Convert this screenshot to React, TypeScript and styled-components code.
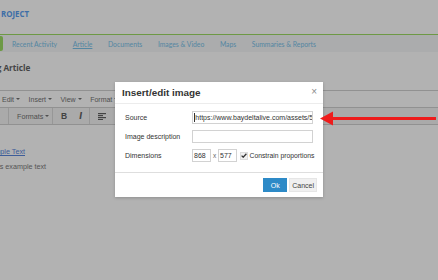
import React from "react";
import styled, { createGlobalStyle } from "styled-components";

const Global = createGlobalStyle`
  html, body { margin: 0; padding: 0; width: 438px; height: 280px; overflow: hidden; background: #ffffff; }
  #root { position: relative; width: 438px; height: 280px; overflow: hidden; }
  * { box-sizing: border-box; }
`;

const Page = styled.div`
  position: relative;
  width: 438px;
  height: 280px;
  background: #ffffff;
  font-family: "Liberation Sans", Arial, sans-serif;
  overflow: hidden;
`;

const Header = styled.header`
  height: 35px;
  display: flex;
  align-items: center;
  padding-left: 1px;
  border-bottom: 1.5px solid #9ddc63;
`;

const Brand = styled.div`
  font-family: "Open Sans", sans-serif;
  font-weight: 700;
  font-size: 7.9px;
  color: #5a9ef0;
  margin-top: -7px;
`;

const Nav = styled.nav`
  height: 17px;
  background: #f5f7f8;
  display: flex;
  align-items: center;
  gap: 15.6px;
`;

const ActiveTab = styled.div`
  width: 3px;
  height: 15px;
  align-self: flex-start;
  margin-top: 1px;
  background: #9ddc63;
  margin-right: -6.6px;
  border-radius: 0 2px 2px 0;
`;

const NavLink = styled.span<{ $current?: boolean }>`
  font-family: "Lato", sans-serif;
  font-size: 6.8px;
  color: #7ac2e9;
  text-decoration: ${(p) => (p.$current ? "underline" : "none")};
  white-space: nowrap;
`;

const PageTitle = styled.h1`
  margin: 10px 0 0 -27px;
  height: 12px;
  font-family: "Open Sans", sans-serif;
  font-weight: 700;
  font-size: 8.2px;
  line-height: 12px;
  color: #626262;
  white-space: nowrap;
`;

const Editor = styled.div`
  margin-top: 16px;
  border-top: 1px solid #d0d0d0;
`;

const MenuBar = styled.div`
  height: 17px;
  display: flex;
  align-items: center;
  gap: 8.5px;
  padding-left: 2px;
  border-bottom: 1px solid #d0d0d0;
`;

const MenuItem = styled.span`
  font-size: 7px;
  color: #727272;
  display: inline-flex;
  align-items: center;
  gap: 2px;
  white-space: nowrap;
`;

const Caret = styled.span`
  display: inline-block;
  width: 0;
  height: 0;
  border-left: 2px solid transparent;
  border-right: 2px solid transparent;
  border-top: 2.5px solid #727272;
`;

const ToolBar = styled.div`
  height: 17px;
  display: flex;
  align-items: center;
  background: #f4f4f4;
  border-bottom: 1px solid #d0d0d0;
`;

const ToolGroup = styled.div<{ $w: number; $first?: boolean }>`
  width: ${(p) => p.$w}px;
  height: 100%;
  display: flex;
  align-items: center;
  gap: 12px;
  padding-left: 8px;
  border-left: ${(p) => (p.$first ? "none" : "1px solid #d8d8d8")};
`;

const ToolText = styled.span`
  font-size: 7.2px;
  color: #727272;
  display: inline-flex;
  align-items: center;
  gap: 2px;
`;

const ToolBold = styled.span`
  font-weight: 700;
  font-size: 8.5px;
  color: #606060;
`;

const ToolItalic = styled.span`
  font-weight: 700;
  font-style: italic;
  font-family: "DejaVu Sans", sans-serif;
  font-size: 8px;
  color: #606060;
`;

const Content = styled.div`
  padding: 22px 0 0 0;
  display: flex;
  flex-direction: column;
  gap: 6px;
  font-size: 7.2px;
  line-height: 9px;
`;

const ContentLink = styled.span`
  color: #5a86dc;
  text-decoration: underline;
  margin-left: -18px;
  white-space: nowrap;
`;

const ContentText = styled.span`
  color: #7a7a7a;
  margin-left: -17.4px;
  white-space: nowrap;
`;

const Overlay = styled.div`
  position: absolute;
  inset: 0;
  background: rgba(0, 0, 0, 0.3);
  display: flex;
  align-items: center;
  justify-content: center;
`;

const Dialog = styled.div`
  width: 208px;
  height: 115px;
  margin-top: -1px;
  background: #ffffff;
  box-shadow: 0 1px 3px rgba(0, 0, 0, 0.2);
  display: flex;
  flex-direction: column;
  color: #333333;
`;

const DialogHead = styled.div`
  height: 22px;
  display: flex;
  align-items: center;
  justify-content: space-between;
  padding: 0 6px 0 7px;
  border-bottom: 1px solid #ececec;
`;

const DialogTitle = styled.span`
  font-weight: 700;
  font-size: 9.9px;
  color: #333333;
  margin-top: -1px;
`;

const Close = styled.span`
  font-size: 10px;
  line-height: 10px;
  color: #8a8a8a;
  margin-top: -2px;
`;

const DialogBody = styled.div`
  flex: 1;
  padding: 7px 10px 0 10px;
  display: flex;
  flex-direction: column;
  gap: 6px;
`;

const FormRow = styled.div`
  height: 13px;
  display: flex;
  align-items: center;
`;

const Label = styled.span`
  width: 67px;
  flex-shrink: 0;
  font-size: 7px;
  color: #333333;
  white-space: nowrap;
`;

const Field = styled.div<{ $w?: number }>`
  width: ${(p) => (p.$w ? `${p.$w}px` : "121px")};
  height: 13px;
  border: 1px solid #d2d2d2;
  padding: 0 1px;
  display: flex;
  align-items: center;
  font-size: 7px;
  color: #333333;
  white-space: nowrap;
  overflow: hidden;
  flex-shrink: 0;
`;

const TextCaret = styled.span`
  display: inline-block;
  width: 0.8px;
  height: 9px;
  background: #333333;
  margin-right: 0.5px;
  flex-shrink: 0;
`;

const Times = styled.span`
  width: 7px;
  flex-shrink: 0;
  text-align: center;
  font-size: 6.5px;
  color: #666;
`;

const Check = styled.span`
  width: 8px;
  height: 8px;
  margin-left: 3px;
  margin-right: 1.5px;
  background: #f0f0f0;
  border: 1px solid #dcdcdc;
  display: inline-flex;
  align-items: center;
  justify-content: center;
  flex-shrink: 0;
`;

const CheckLabel = styled.span`
  font-size: 6.8px;
  color: #333333;
  white-space: nowrap;
`;

const DialogFoot = styled.div`
  height: 25px;
  border-top: 1px solid #dedede;
  display: flex;
  align-items: center;
  justify-content: flex-end;
  gap: 2px;
  padding-right: 6px;
`;

const Button = styled.span<{ $primary?: boolean }>`
  height: 14px;
  display: inline-flex;
  align-items: center;
  justify-content: center;
  padding: 0 ${(p) => (p.$primary ? "6.5px" : "2px")};
  font-size: 7px;
  background: ${(p) => (p.$primary ? "#2d8ac7" : "#f0f0f0")};
  color: ${(p) => (p.$primary ? "#ffffff" : "#444444")};
  border: 1px solid ${(p) => (p.$primary ? "#2d8ac7" : "#e6e6e6")};
`;

const ArrowSvg = styled.svg`
  position: absolute;
  left: 318px;
  top: 110px;
`;

const AlignIcon = ({ center }: { center?: boolean }) => (
  <svg width="8" height="7" viewBox="0 0 8 7">
    <rect x="0" y="0" width="8" height="1.2" fill="#606060" />
    <rect x={center ? 1.5 : 0} y="2" width="5" height="1.2" fill="#606060" />
    <rect x="0" y="4" width="8" height="1.2" fill="#606060" />
    <rect x={center ? 1.5 : 0} y="6" width="5" height="1" fill="#606060" />
  </svg>
);

export default function App() {
  return (
    <>
      <Global />
      <Page>
        <Header>
          <Brand>ROJECT</Brand>
        </Header>
        <Nav>
          <ActiveTab />
          <NavLink>Recent Activity</NavLink>
          <NavLink $current>Article</NavLink>
          <NavLink>Documents</NavLink>
          <NavLink>Images &amp; Video</NavLink>
          <NavLink>Maps</NavLink>
          <NavLink>Summaries &amp; Reports</NavLink>
        </Nav>
        <PageTitle>Editing Article</PageTitle>
        <Editor>
          <MenuBar>
            <MenuItem>Edit <Caret /></MenuItem>
            <MenuItem>Insert <Caret /></MenuItem>
            <MenuItem>View <Caret /></MenuItem>
            <MenuItem>Format <Caret /></MenuItem>
          </MenuBar>
          <ToolBar>
            <ToolGroup $w={4} $first />
            <ToolGroup $w={44}>
              <ToolText>Formats <Caret /></ToolText>
            </ToolGroup>
            <ToolGroup $w={37}>
              <ToolBold>B</ToolBold>
              <ToolItalic>I</ToolItalic>
            </ToolGroup>
            <ToolGroup $w={60}>
              <AlignIcon />
              <AlignIcon center />
            </ToolGroup>
          </ToolBar>
          <Content>
            <ContentLink>Example Text</ContentLink>
            <ContentText>This is example text</ContentText>
          </Content>
        </Editor>
        <Overlay>
          <Dialog>
            <DialogHead>
              <DialogTitle>Insert/edit image</DialogTitle>
              <Close>×</Close>
            </DialogHead>
            <DialogBody>
              <FormRow>
                <Label>Source</Label>
                <Field>
                  <TextCaret />
                  https://www.baydeltalive.com/assets/5468f0e4f8b2c5a3d1
                </Field>
              </FormRow>
              <FormRow>
                <Label>Image description</Label>
                <Field />
              </FormRow>
              <FormRow>
                <Label>Dimensions</Label>
                <Field $w={19}>868</Field>
                <Times>x</Times>
                <Field $w={19}>577</Field>
                <Check>
                  <svg width="6" height="5" viewBox="0 0 6 5">
                    <path d="M0.6 2.6 L2.2 4.2 L5.4 0.8" stroke="#333" strokeWidth="1.3" fill="none" />
                  </svg>
                </Check>
                <CheckLabel>Constrain proportions</CheckLabel>
              </FormRow>
            </DialogBody>
            <DialogFoot>
              <Button $primary>Ok</Button>
              <Button>Cancel</Button>
            </DialogFoot>
          </Dialog>
        </Overlay>
        <ArrowSvg width="120" height="17" viewBox="0 0 120 17">
          <path d="M2 8.5 L15 1.5 L15 15.5 Z" fill="#ee1c1c" />
          <rect x="14" y="7" width="104" height="3" fill="#ee1c1c" />
        </ArrowSvg>
      </Page>
    </>
  );
}
